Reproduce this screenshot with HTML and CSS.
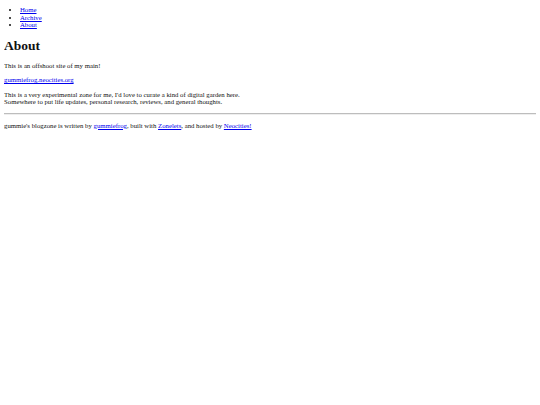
FILE: index.html
```html
<!DOCTYPE html>
<html lang="en">
<head>
<meta charset="utf-8">
<title>About</title>
<link rel="stylesheet" href="styles.css">
</head>
<body class="page">
<nav class="nav">
  <ul class="nav-list">
    <li><a href="#">Home</a></li>
    <li><a href="#">Archive</a></li>
    <li><a href="#">About</a></li>
  </ul>
</nav>
<main class="content">
  <h1 class="title">About</h1>
  <p class="para">This is an offshoot site of my main!</p>
  <p class="para"><a href="#">gummiefrog.neocities.org</a></p>
  <p class="para">This is a very experimental zone for me, I'd love to curate a kind of digital garden here.<br>Somewhere to put life updates, personal research, reviews, and general thoughts.</p>
</main>
<hr class="rule">
<footer class="footer">
  <p class="para">gummie's blogzone is written by <a href="#">gummiefrog</a>, built with <a href="#">Zonelets</a>, and hosted by <a href="#">Neocities!</a></p>
</footer>
</body>
</html>
```

FILE: styles.css
```css
html {
  background: #ffffff;
}
.page {
  margin: 3px 4px 4px;
  font-family: "Liberation Serif", "Times New Roman", serif;
  font-size: 6.75px;
  line-height: 7.5px;
  color: #111111;
}
.nav-list {
  margin: 3px 0 6px;
  padding-left: 16px;
  list-style: disc;
}
a {
  color: #0000ee;
  text-decoration: underline;
}
.title {
  font-size: 13.5px;
  line-height: 15px;
  font-weight: bold;
  margin: 9.5px 0 8.5px;
}
.para {
  margin: 7px 0;
}
.rule {
  height: 0;
  margin: 4px 0;
  border: none;
  border-top: 1px solid #bdbdbd;
  border-bottom: 1px solid #eeeeee;
}
```
